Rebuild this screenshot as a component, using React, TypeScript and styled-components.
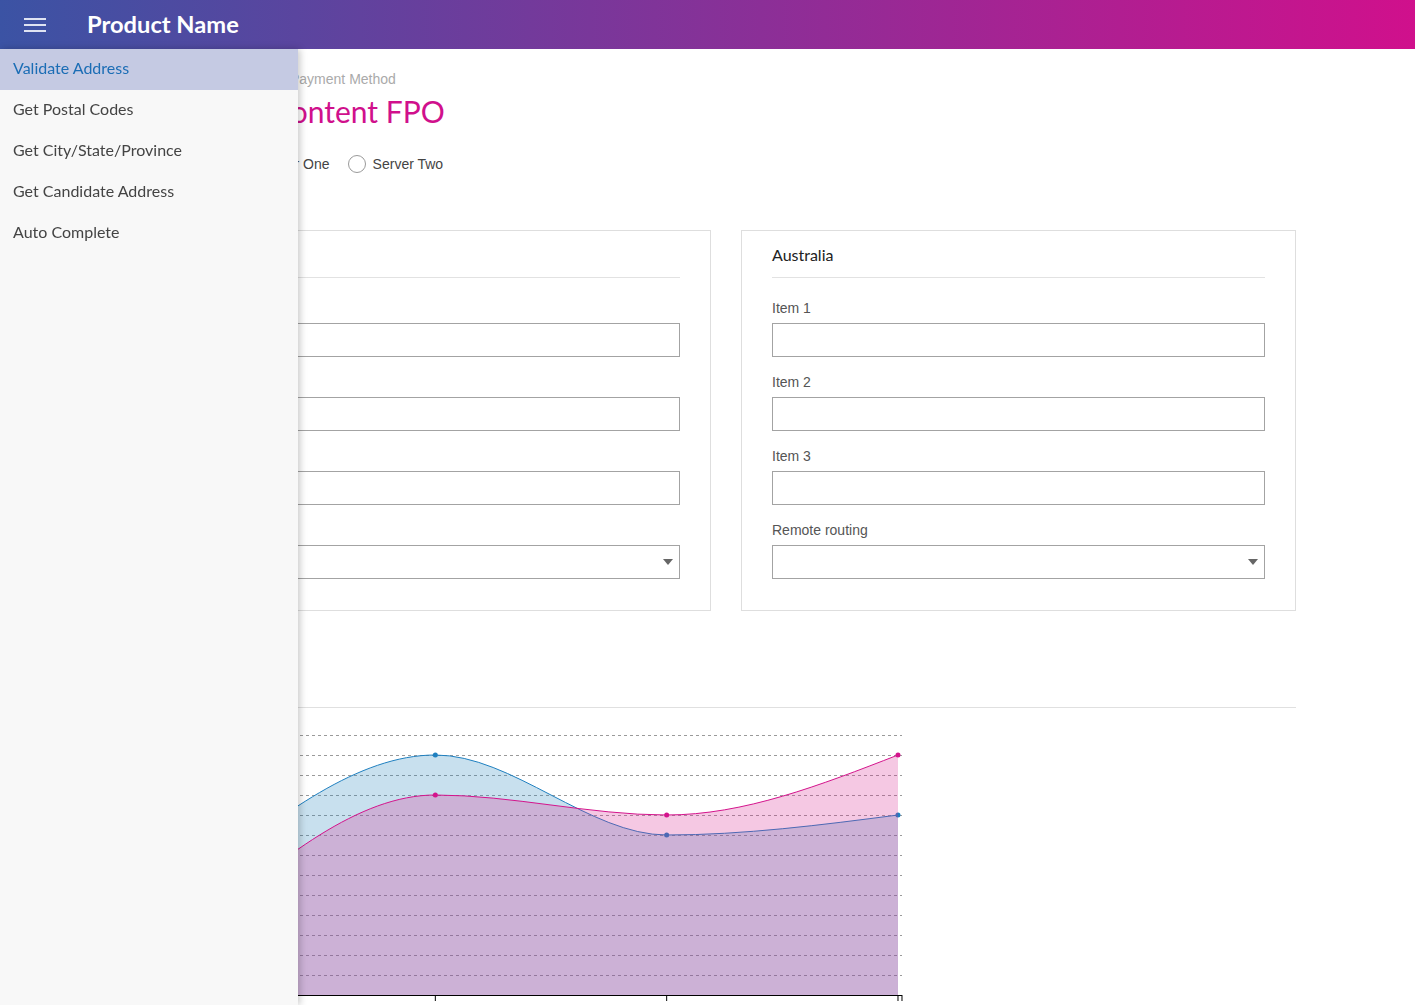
import React from 'react';
import styled, { createGlobalStyle } from 'styled-components';

const GlobalStyle = createGlobalStyle`
  html, body {
    margin: 0;
    padding: 0;
    background: #ffffff;
    overflow: hidden;
  }
  body {
    font-family: 'Liberation Sans', Arial, sans-serif;
    color: #444;
  }
  * {
    box-sizing: border-box;
  }
`;

const HUMANIST = "Lato, 'Open Sans', sans-serif";

const Header = styled.header`
  height: 49px;
  display: flex;
  align-items: center;
  background: linear-gradient(90deg, #3b53a4 0%, #d0108c 100%);
  color: #fff;
`;

const MenuButton = styled.button`
  width: 70px;
  height: 49px;
  padding: 0 0 0 24px;
  border: none;
  background: transparent;
  display: flex;
  align-items: center;
  cursor: pointer;
`;

const ProductName = styled.h1`
  margin: -2px 0 0 17px;
  font-family: ${HUMANIST};
  font-weight: 700;
  font-size: 23.7px;
  color: #fff;
`;

const Drawer = styled.nav`
  position: fixed;
  top: 49px;
  left: 0;
  bottom: 0;
  width: 298px;
  background: #f8f8f8;
  box-shadow: 2px 0 7px rgba(0, 0, 0, 0.22);
  z-index: 10;
`;

const NavItem = styled.a<{ $active?: boolean }>`
  display: block;
  height: 41px;
  line-height: 38px;
  padding: 0 13px;
  font-family: ${HUMANIST};
  font-size: 16px;
  color: ${(p) => (p.$active ? '#1b6db5' : '#444')};
  background: ${(p) => (p.$active ? '#c5cae3' : 'transparent')};
  text-decoration: none;
`;

const Main = styled.main`
  width: 1296px;
  padding-left: 156px;
`;

const TopBlock = styled.div`
  padding: 20px 0 0 134px;
  height: 181px;
`;

const Breadcrumb = styled.div`
  font-size: 14px;
  line-height: 20px;
  color: #aaa;
`;

const Title = styled.h2`
  margin: 2px 0 0 -19px;
  font-family: ${HUMANIST};
  font-weight: 400;
  font-size: 30px;
  line-height: 40px;
  color: #d0108c;
`;

const RadioRow = styled.div`
  display: flex;
  gap: 18px;
  margin: 23px 0 0 -57px;
`;

const RadioLabel = styled.label`
  display: flex;
  align-items: center;
  gap: 7px;
  font-size: 14px;
  line-height: 20px;
  color: #444;
`;

const RadioCircle = styled.span`
  width: 18px;
  height: 18px;
  border-radius: 50%;
  border: 1px solid #9a9a9a;
  background: #fff;
`;

const CardGrid = styled.div`
  display: grid;
  grid-template-columns: 555px 555px;
  gap: 30px;
`;

const Card = styled.section`
  border: 1px solid #dedede;
  padding: 0 30px 31px;
`;

const CardTitle = styled.h3`
  margin: 0 0 20px;
  padding: 13px 0 11px;
  font-family: ${HUMANIST};
  font-weight: 400;
  font-size: 16px;
  line-height: 22px;
  color: #222;
  border-bottom: 1px solid #e2e2e2;
`;

const Field = styled.div`
  & + & {
    margin-top: 15px;
  }
`;

const FieldLabel = styled.label`
  display: block;
  font-size: 14px;
  line-height: 20px;
  color: #555;
  margin-bottom: 5px;
`;

const TextInput = styled.input`
  display: block;
  width: 100%;
  height: 34px;
  border: 1px solid #a3a3a3;
  background: #fff;
  padding: 0 8px;
  font-size: 14px;
`;

const SelectBox = styled.div`
  position: relative;
  height: 34px;
  border: 1px solid #a3a3a3;
  background: #fff;
`;

const Caret = styled.span`
  position: absolute;
  right: 6px;
  top: 13px;
  width: 0;
  height: 0;
  border-left: 5px solid transparent;
  border-right: 5px solid transparent;
  border-top: 6px solid #666;
`;

const Divider = styled.hr`
  margin: 96px 0 0;
  border: none;
  border-top: 1px solid #e0e0e0;
`;

const ChartWrap = styled.div`
  margin-top: 7px;
`;

const fields = ['Item 1', 'Item 2', 'Item 3'];

const FormCard: React.FC<{ title: string }> = ({ title }) => (
  <Card>
    <CardTitle>{title}</CardTitle>
    {fields.map((f) => (
      <Field key={f}>
        <FieldLabel>{f}</FieldLabel>
        <TextInput type="text" />
      </Field>
    ))}
    <Field>
      <FieldLabel>Remote routing</FieldLabel>
      <SelectBox>
        <Caret />
      </SelectBox>
    </Field>
  </Card>
);

type Pt = [number, number];

const sign = (x: number) => (x < 0 ? -1 : 1);

// monotone-x interpolation, same as d3.curveMonotoneX
function monotone(pts: Pt[]): string {
  const n = pts.length;
  const h: number[] = [];
  const s: number[] = [];
  for (let i = 0; i < n - 1; i++) {
    h.push(pts[i + 1][0] - pts[i][0]);
    s.push((pts[i + 1][1] - pts[i][1]) / h[i]);
  }
  const t: number[] = new Array(n).fill(0);
  for (let i = 1; i < n - 1; i++) {
    const p = (s[i - 1] * h[i] + s[i] * h[i - 1]) / (h[i - 1] + h[i]);
    t[i] =
      (sign(s[i - 1]) + sign(s[i])) *
        Math.min(Math.abs(s[i - 1]), Math.abs(s[i]), 0.5 * Math.abs(p)) || 0;
  }
  t[0] = (3 * s[0] - t[1]) / 2;
  t[n - 1] = (3 * s[n - 2] - t[n - 2]) / 2;
  let d = `M${pts[0][0]},${pts[0][1]}`;
  for (let i = 0; i < n - 1; i++) {
    const dx = h[i] / 3;
    const [x0, y0] = pts[i];
    const [x1, y1] = pts[i + 1];
    d += ` C${x0 + dx},${y0 + dx * t[i]} ${x1 - dx},${y1 - dx * t[i + 1]} ${x1},${y1}`;
  }
  return d;
}

const X0 = 48;
const STEP = 231.33;
const BASE = 280;
const xs = [0, 1, 2, 3].map((i) => X0 + i * STEP);
const toY = (v: number) => BASE - 20 * v;

const series = [
  { name: 'blue', color: '#1f80c0', fill: '#2383bb', values: [6, 12, 8, 9] },
  { name: 'pink', color: '#d4148c', fill: '#d7238f', values: [3.6, 10, 9, 12] },
];

const AreaChart: React.FC = () => {
  const right = xs[3] + 4;
  return (
    <svg width={760} height={300} viewBox="0 0 760 300">
      {Array.from({ length: 13 }, (_, k) => (
        <line
          key={k}
          x1={0}
          x2={right}
          y1={20 + k * 20 + 0.5}
          y2={20 + k * 20 + 0.5}
          stroke="#9a9a9a"
          strokeDasharray="3,3"
        />
      ))}
      {series.map((s) => {
        const pts: Pt[] = s.values.map((v, i) => [xs[i], toY(v)]);
        const line = monotone(pts);
        const area = `${line} L${xs[3]},${BASE} L${xs[0]},${BASE} Z`;
        return (
          <g key={s.name}>
            <path d={area} fill={s.fill} fillOpacity={0.25} />
            <path d={line} fill="none" stroke={s.color} strokeWidth={1} />
            {pts.map(([x, y], i) => (
              <circle key={i} cx={x} cy={y} r={2.5} fill={s.color} />
            ))}
          </g>
        );
      })}
      <line x1={0} x2={right} y1={BASE + 0.5} y2={BASE + 0.5} stroke="#000" />
      {[...xs, right].map((x, i) => (
        <line key={i} x1={x} x2={x} y1={BASE} y2={BASE + 6} stroke="#000" />
      ))}
    </svg>
  );
};

const Hamburger = () => (
  <svg width="22" height="14" viewBox="0 0 22 14">
    <g stroke="#dfe3f2" strokeWidth="2">
      <line x1="0" y1="1" x2="22" y2="1" />
      <line x1="0" y1="7" x2="22" y2="7" />
      <line x1="0" y1="13" x2="22" y2="13" />
    </g>
  </svg>
);

const navItems = [
  'Validate Address',
  'Get Postal Codes',
  'Get City/State/Province',
  'Get Candidate Address',
  'Auto Complete',
];

const App: React.FC = () => (
  <>
    <GlobalStyle />
    <Header>
      <MenuButton aria-label="menu">
        <Hamburger />
      </MenuButton>
      <ProductName>Product Name</ProductName>
    </Header>
    <Main>
      <TopBlock>
        <Breadcrumb>Payment Method</Breadcrumb>
        <Title>Content FPO</Title>
        <RadioRow>
          <RadioLabel>
            <RadioCircle />
            Server One
          </RadioLabel>
          <RadioLabel>
            <RadioCircle />
            Server Two
          </RadioLabel>
        </RadioRow>
      </TopBlock>
      <CardGrid>
        <FormCard title="United States" />
        <FormCard title="Australia" />
      </CardGrid>
      <Divider />
      <ChartWrap>
        <AreaChart />
      </ChartWrap>
    </Main>
    <Drawer>
      {navItems.map((item, i) => (
        <NavItem key={item} href="#" $active={i === 0}>
          {item}
        </NavItem>
      ))}
    </Drawer>
  </>
);

export default App;
